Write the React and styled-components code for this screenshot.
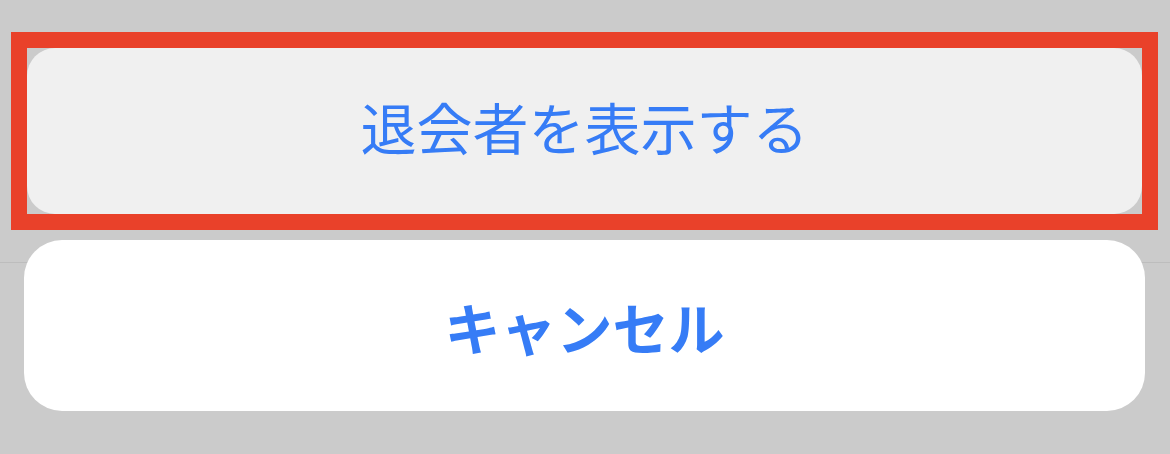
import React from "react";
import styled, { createGlobalStyle } from "styled-components";

const GlobalStyle = createGlobalStyle`
  html, body {
    margin: 0;
    padding: 0;
  }
  body {
    width: 1170px;
    height: 454px;
    overflow: hidden;
    background-color: #cbcbcb;
    background-image: linear-gradient(
      to bottom,
      transparent 262px,
      #bdbdbd 262px,
      #bdbdbd 263px,
      transparent 263px
    );
    font-family: "Noto Sans CJK JP", "Noto Sans", sans-serif;
  }
`;

const Sheet = styled.div`
  display: flex;
  flex-direction: column;
  padding-top: 32px;
  gap: 10px;
`;

const Highlight = styled.div`
  margin-left: 11px;
  width: 1147px;
  box-sizing: border-box;
  border: 16px solid #e9412a;
`;

const ActionButton = styled.button`
  display: flex;
  align-items: center;
  justify-content: center;
  width: 100%;
  height: ${(p) => p.height}px;
  border: none;
  border-radius: ${(p) => p.radius}px;
  background: ${(p) => (p.muted ? "#f0f0f0" : "#ffffff")};
  color: #367cf6;
  font-family: inherit;
  font-size: 56px;
  line-height: 1;
  font-weight: ${(p) => (p.bold ? 700 : 400)};
  padding: 0 0 ${(p) => p.lift || 0}px;
  cursor: pointer;
`;

const CancelWrap = styled.div`
  margin-left: 24px;
  width: 1121px;
`;

const App = () => {
  return (
    <>
      <GlobalStyle />
      <Sheet>
        <Highlight>
          <ActionButton muted height={166} radius={28} lift={10}>
            退会者を表示する
          </ActionButton>
        </Highlight>
        <CancelWrap>
          <ActionButton bold height={171} radius={38}>
            キャンセル
          </ActionButton>
        </CancelWrap>
      </Sheet>
    </>
  );
};

export default App;
